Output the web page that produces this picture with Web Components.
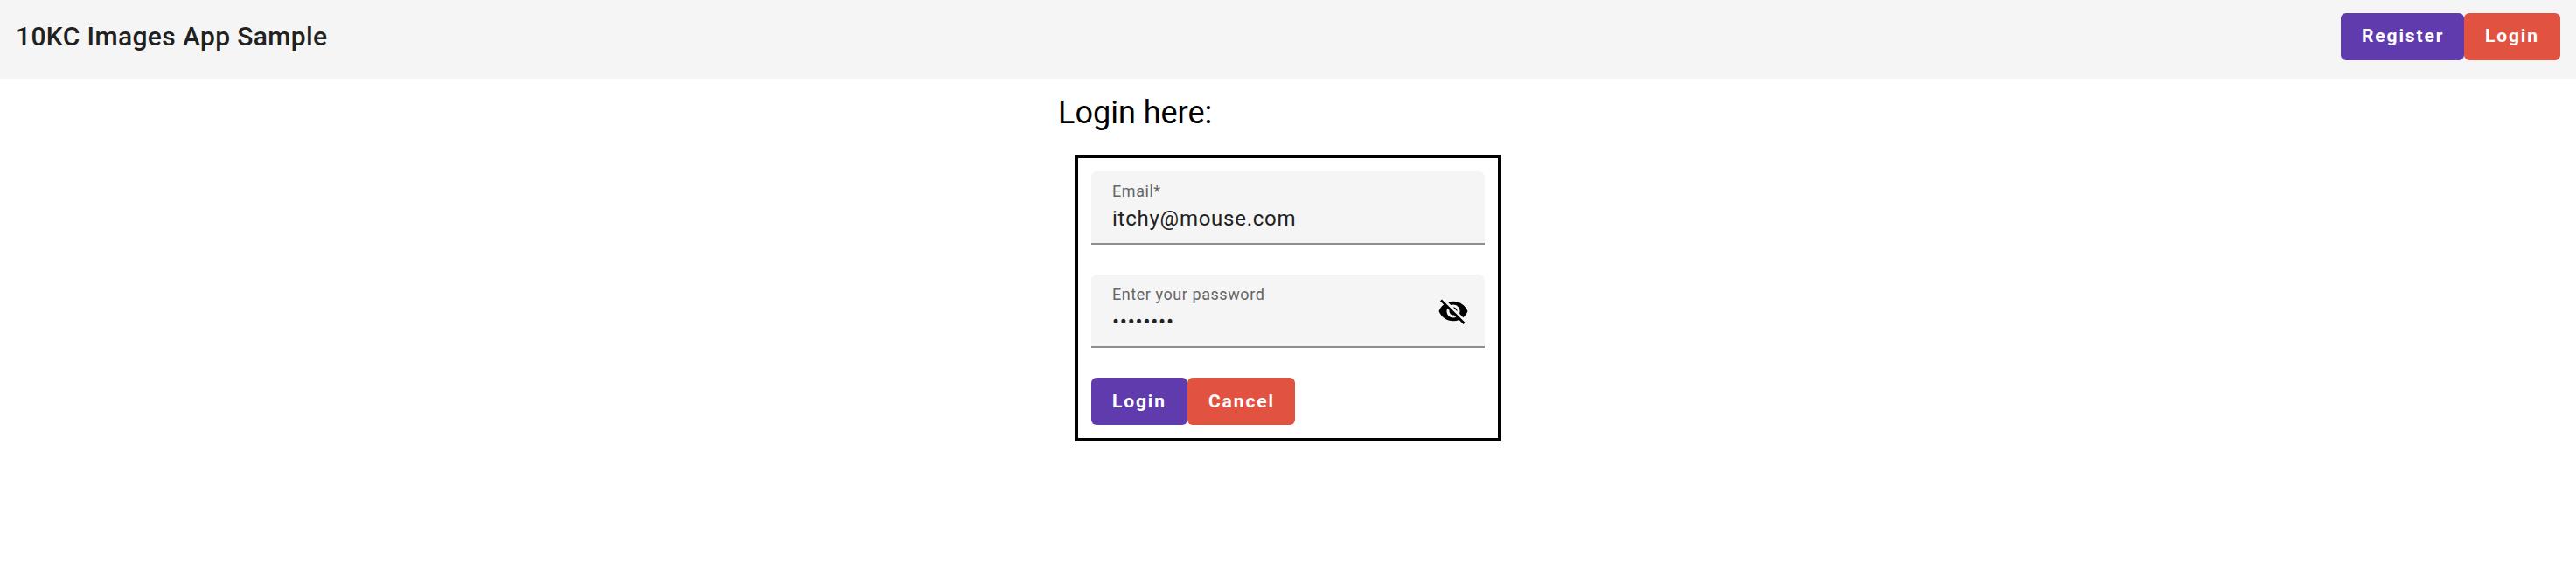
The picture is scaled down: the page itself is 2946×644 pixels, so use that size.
<!DOCTYPE html>
<html lang="en">
<head>
<meta charset="utf-8">
<title>10KC Images App Sample</title>
<style>
body { margin: 0; background: #fff; font-family: Roboto, "Liberation Sans", sans-serif; }
</style>
</head>
<body>
<app-root></app-root>
<script>
const define = (name, markup) => {
  const template = document.createElement('template');
  template.innerHTML = markup;
  customElements.define(name, class extends HTMLElement {
    constructor() {
      super();
      this.attachShadow({ mode: 'open' }).append(template.content.cloneNode(true));
    }
  });
};

define('app-button', `
<style>
  :host { display: block; }
  button { display: flex; align-items: flex-start; box-sizing: border-box; width: 100%; height: 54px; margin: 0; padding: 0 0 0 24px; border: 0; border-radius: 6px; background: #603bae; color: #fff; font: 700 21px/var(--label-line, 54px) Roboto, "Liberation Sans", sans-serif; letter-spacing: 1.875px; text-align: left; white-space: nowrap; }
  :host([color=warn]) button { background: #e15241; }
</style>
<button type="button"><slot></slot></button>`);

define('app-toolbar', `
<style>
  :host { display: flex; box-sizing: border-box; height: 90px; padding: 15px 18px 0; background: #f5f5f5; align-items: flex-start; justify-content: space-between; --label-line: 52px; }
  h1 { margin: 0; font-size: 30px; line-height: 54px; font-weight: 500; letter-spacing: 0.375px; color: #212121; white-space: nowrap; }
  nav { display: flex; }
</style>
<h1><slot></slot></h1>
<nav><slot name="actions"></slot></nav>`);

define('visibility-off-icon', `
<style>:host { display: block; width: 36px; height: 36px; margin-top: 2px; } svg { display: block; }</style>
<svg width="36" height="36" viewBox="0 0 24 24"><path d="M12 7c2.76 0 5 2.24 5 5 0 .65-.13 1.26-.36 1.83l2.92 2.92c1.51-1.26 2.7-2.89 3.43-4.75-1.73-4.39-6-7.5-11-7.5-1.4 0-2.74.25-3.98.7l2.16 2.16C10.74 7.13 11.35 7 12 7zM2 4.27l2.28 2.28.46.46C3.08 8.3 1.78 10.02 1 12c1.73 4.39 6 7.5 11 7.5 1.55 0 3.03-.3 4.38-.84l.42.42L19.73 22 21 20.73 3.27 3 2 4.27zM7.53 9.8l1.55 1.55c-.05.21-.08.43-.08.65 0 1.66 1.34 3 3 3 .22 0 .44-.03.65-.08l1.55 1.55c-.67.33-1.41.53-2.2.53-2.76 0-5-2.24-5-5 0-.79.2-1.53.53-2.2zm4.31-.78l3.15 3.15.02-.16c0-1.66-1.34-3-3-3l-.17.01z"/></svg>`);

define('form-field', `
<style>
  :host { display: flex; box-sizing: border-box; height: 84px; padding: 0 18px 0 24px; background: #f5f5f5; border-bottom: 2px solid #8e8e8e; justify-content: space-between; align-items: center; clip-path: polygon(0 6px, 1px 3px, 3px 1px, 6px 0, calc(100% - 6px) 0, calc(100% - 3px) 1px, calc(100% - 1px) 3px, 100% 6px, 100% 100%, 0 100%); }
  .text { display: flex; flex-direction: column; align-self: flex-start; padding-top: 12px; white-space: nowrap; }
  .label { font-size: 18px; line-height: 22px; letter-spacing: 0.5625px; color: #666; }
  .value { font-size: 24px; line-height: 40px; letter-spacing: 0.75px; color: #212121; }
</style>
<div class="text"><span class="label"><slot name="label"></slot></span><span class="value"><slot></slot></span></div>
<slot name="suffix"></slot>`);

define('login-form', `
<style>
  :host { display: block; width: 528px; margin: 0 auto; }
  h2 { margin: 0 0 0 1px; padding-top: 12px; font-size: 36px; line-height: 54px; font-weight: 400; color: #000; white-space: nowrap; }
  form { display: flex; flex-direction: column; box-sizing: border-box; width: 488px; height: 328px; margin: 21px 20px 0; padding: 15px; border: 4px solid #000; }
  form-field { margin-bottom: 34px; }
  .actions { display: flex; }
</style>
<h2>Login here:</h2>
<form>
  <form-field><span slot="label">Email*</span>itchy@mouse.com</form-field>
  <form-field><span slot="label">Enter your password</span>••••••••<visibility-off-icon slot="suffix"></visibility-off-icon></form-field>
  <div class="actions">
    <app-button style="width:110px">Login</app-button>
    <app-button color="warn" style="width:123px">Cancel</app-button>
  </div>
</form>`);

define('app-root', `
<style>:host { display: block; }</style>
<app-toolbar>10KC Images App Sample
  <app-button slot="actions" style="width:141px">Register</app-button>
  <app-button slot="actions" color="warn" style="width:110px">Login</app-button>
</app-toolbar>
<login-form></login-form>`);
</script>
</body>
</html>
